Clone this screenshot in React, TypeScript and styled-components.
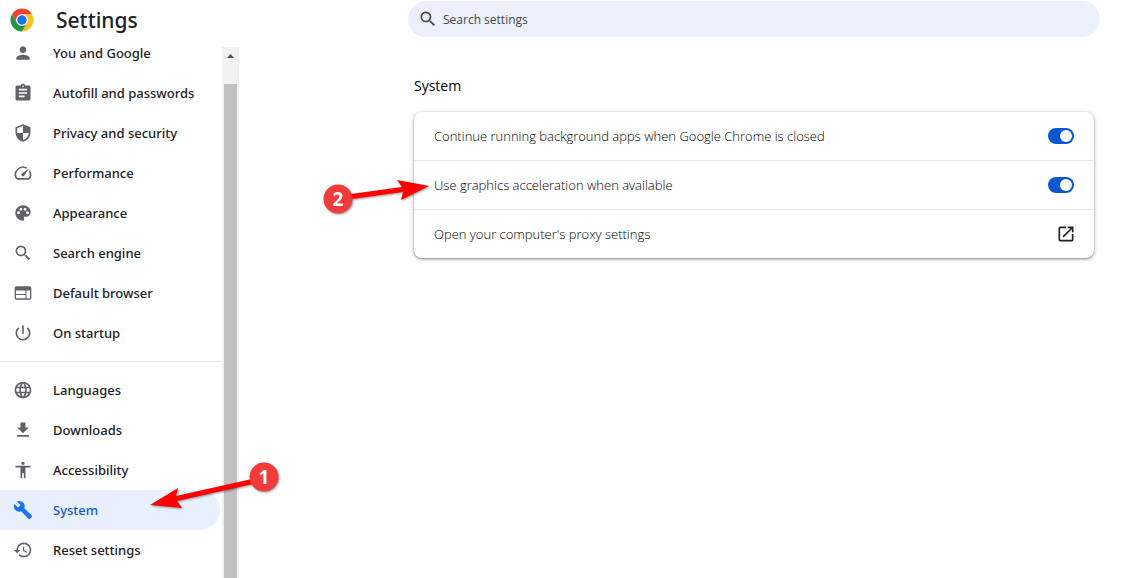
import React from "react";
import styled, { createGlobalStyle } from "styled-components";
import type { IconType } from "react-icons";
import {
  MdAccessibility,
  MdAssignment,
  MdBuild,
  MdFileDownload,
  MdHistory,
  MdLanguage,
  MdOpenInNew,
  MdPerson,
  MdPowerSettingsNew,
  MdSearch,
} from "react-icons/md";

const GlobalStyle = createGlobalStyle`
  * { box-sizing: border-box; }
  body {
    margin: 0;
    background: #fff;
    color: #202124;
    font-family: "Noto Sans", "Open Sans", sans-serif;
    font-size: 13px;
  }
`;

const Page = styled.div`
  position: relative;
  display: grid;
  grid-template-columns: 239px minmax(0, 1fr);
  height: 100vh;
  overflow: hidden;
`;

const Sidebar = styled.aside`
  display: flex;
  flex-direction: column;
  min-height: 0;
`;

const Brand = styled.header`
  display: flex;
  align-items: center;
  gap: 22px;
  flex: none;
  height: 47px;
  padding: 0 0 8px 10px;
`;

const Title = styled.h1`
  margin: 0;
  font-size: 21px;
  font-weight: 500;
  line-height: 28px;
`;

const MenuArea = styled.div`
  display: flex;
  flex: 1;
  min-height: 0;
`;

const Menu = styled.nav`
  flex: 1;
  margin-top: -14px;
`;

const MenuLink = styled.a<{ $current?: boolean }>`
  display: flex;
  align-items: center;
  gap: 20px;
  height: 40px;
  margin-right: 2px;
  padding-left: 13px;
  border-radius: 0 20px 20px 0;
  background: ${(p) => (p.$current ? "#e8f0fe" : "transparent")};
  color: ${(p) => (p.$current ? "#1a57cf" : "#202124")};
  font-weight: 500;
  text-decoration: none;

  svg {
    width: 20px;
    height: 20px;
    color: ${(p) => (p.$current ? "#1a73e8" : "#5f6368")};
  }
`;

const Divider = styled.hr`
  height: 1px;
  margin: 8px 0;
  border: 0;
  background: #e8eaed;
`;

const ScrollTrack = styled.div`
  display: flex;
  flex-direction: column;
  align-items: center;
  flex: none;
  width: 17px;
  background: #f1f1f1;

  svg {
    flex: none;
    width: 17px;
    height: 17px;
    margin-bottom: 20px;
  }
`;

const ScrollThumb = styled.div`
  flex: 1;
  width: 13px;
  background: #c1c1c1;
`;

const Main = styled.main`
  padding: 1px 39px 0 169px;
`;

const SearchBox = styled.label`
  display: flex;
  align-items: center;
  gap: 5px;
  height: 36px;
  padding: 0 20px 0 10px;
  border-radius: 18px;
  background: #ecf0fa;
  color: #474747;

  svg {
    flex: none;
    width: 20px;
    height: 20px;
  }
`;

const SearchInput = styled.input`
  flex: 1;
  min-width: 0;
  padding: 0;
  border: 0;
  outline: 0;
  background: transparent;
  color: #474747;
  font: 500 12px "Open Sans", "Noto Sans", sans-serif;

  &::placeholder {
    color: #474747;
    opacity: 1;
  }
`;

const Section = styled.section`
  padding: 39px 6px 0;
  color: #000;
  font-family: "Open Sans", "Noto Sans", sans-serif;
`;

const SectionTitle = styled.h2`
  margin: 0 0 16px;
  font-size: 14px;
  font-weight: 400;
  line-height: 20px;
`;

const Card = styled.div`
  border-radius: 8px;
  background: #fff;
  box-shadow: 0 1px 2px rgba(60, 64, 67, 0.5), 0 1px 4px 1px rgba(60, 64, 67, 0.2);
`;

const Row = styled.label`
  display: flex;
  align-items: center;
  justify-content: space-between;
  height: 48px;
  padding: 0 20px;
  font-weight: 300;

  & + & {
    height: 49px;
    border-top: 1px solid #e8eaed;
  }
`;

const Switch = styled.input`
  display: grid;
  align-items: center;
  justify-items: start;
  appearance: none;
  width: 26px;
  height: 16px;
  margin: 0;
  padding: 0 2px;
  border-radius: 8px;
  background: #9aa0a6;

  &::before {
    content: "";
    width: 12px;
    height: 12px;
    border-radius: 50%;
    background: #fff;
  }

  &:checked {
    justify-items: end;
    background: #0b57d0;
  }
`;

const IconButton = styled.button`
  display: flex;
  margin: 0 -2px 0 0;
  padding: 0;
  border: 0;
  background: none;
  color: #202124;

  svg {
    width: 20px;
    height: 20px;
  }
`;

const Callouts = styled.svg`
  position: absolute;
  top: 0;
  left: 0;
  pointer-events: none;
  filter: drop-shadow(1px 1px 1px rgba(0, 0, 0, 0.4));

  text {
    fill: #fff;
    font: 700 19px "Open Sans", sans-serif;
    text-anchor: middle;
  }
`;

const ChromeLogo = () => (
  <svg width="24" height="24" viewBox="0 0 48 48" aria-hidden="true">
    <path d="M4.08 12.5A23 23 0 0 1 43.92 12.5H24A11.5 11.5 0 0 0 14.04 29.75Z" fill="#ea4335" />
    <path d="M43.92 12.5A23 23 0 0 1 24 47L33.96 29.75A11.5 11.5 0 0 0 24 12.5Z" fill="#fcc31e" />
    <path d="M24 47A23 23 0 0 1 4.08 12.5L14.04 29.75A11.5 11.5 0 0 0 33.96 29.75Z" fill="#229342" />
    <circle cx="24" cy="24" r="11.5" fill="#fff" />
    <circle cx="24" cy="24" r="9.5" fill="#1a73e8" />
  </svg>
);

const ShieldIcon = () => (
  <svg viewBox="0 0 24 24" fill="currentColor" aria-hidden="true">
    <path
      fillRule="evenodd"
      d="M12 1.500 3 5v6c0 5.550 3.840 10.240 9 11.500 5.160-1.260 9-5.950 9-11.500V5l-9-3.500zM12 3.700V12h7c-.53 4.120-3.280 7.290-7 8.440V12H5V6.400l7-2.700z"
    />
  </svg>
);

const GaugeIcon = () => (
  <svg viewBox="0 0 24 24" fill="currentColor" aria-hidden="true">
    <path d="m20.38 8.57-1.23 1.85a8 8 0 0 1-.22 7.58H5.07A8 8 0 0 1 15.58 6.85l1.85-1.23A10 10 0 0 0 3.35 19a2 2 0 0 0 1.72 1h13.85a2 2 0 0 0 1.74-1 10 10 0 0 0-.27-10.44z" />
    <path d="M10.59 15.41a2 2 0 0 0 2.83 0l5.66-8.49-8.49 5.66a2 2 0 0 0 0 2.83z" />
  </svg>
);

const PaletteIcon = () => (
  <svg viewBox="0 0 24 24" fill="currentColor" aria-hidden="true">
    <path
      fillRule="evenodd"
      d="M12 2.800c5.200 0 9.200 3.500 9.200 8.100 0 3.300-2.600 5.700-5.600 5.700h-1.700c-.8 0-1.200.8-.8 1.400.8 1.300.4 3.200-1.100 3.200-5.100 0-9.200-4.100-9.200-9.200S6.900 2.800 12 2.800zM6.600 10a1.700 1.700 0 1 0 0 3.400 1.700 1.700 0 1 0 0-3.400zM9.500 5.900a1.700 1.700 0 1 0 0 3.400 1.700 1.700 0 1 0 0-3.400zM14.500 5.900a1.700 1.700 0 1 0 0 3.400 1.700 1.700 0 1 0 0-3.400zM17.400 10a1.700 1.700 0 1 0 0 3.400 1.700 1.700 0 1 0 0-3.400z"
    />
  </svg>
);

const BrowserIcon = () => (
  <svg viewBox="0 0 24 24" fill="currentColor" aria-hidden="true">
    <path
      fillRule="evenodd"
      d="M4 4h16a2 2 0 0 1 2 2v12a2 2 0 0 1-2 2H4a2 2 0 0 1-2-2V6c0-1.1.9-2 2-2zM3.600 9v4.200h11.400V9H3.600zM3.600 14.400v4h11.400v-4H3.600zM16.200 9v9.400h4.200V9h-4.200z"
    />
  </svg>
);

type Entry = { label: string; icon: IconType | (() => React.JSX.Element); current?: boolean };

const primary: Entry[] = [
  { label: "You and Google", icon: MdPerson },
  { label: "Autofill and passwords", icon: MdAssignment },
  { label: "Privacy and security", icon: ShieldIcon },
  { label: "Performance", icon: GaugeIcon },
  { label: "Appearance", icon: PaletteIcon },
  { label: "Search engine", icon: MdSearch },
  { label: "Default browser", icon: BrowserIcon },
  { label: "On startup", icon: MdPowerSettingsNew },
];

const advanced: Entry[] = [
  { label: "Languages", icon: MdLanguage },
  { label: "Downloads", icon: MdFileDownload },
  { label: "Accessibility", icon: MdAccessibility },
  { label: "System", icon: MdBuild, current: true },
  { label: "Reset settings", icon: MdHistory },
];

const renderEntry = ({ label, icon: Icon, current }: Entry) => (
  <MenuLink key={label} href="#" $current={current} aria-current={current ? "page" : undefined}>
    <Icon />
    {label}
  </MenuLink>
);

export default function App() {
  return (
    <Page>
      <GlobalStyle />
      <Sidebar>
        <Brand>
          <ChromeLogo />
          <Title>Settings</Title>
        </Brand>
        <MenuArea>
          <Menu>
            {primary.map(renderEntry)}
            <Divider />
            {advanced.map(renderEntry)}
          </Menu>
          <ScrollTrack>
            <svg viewBox="0 0 17 17" aria-hidden="true">
              <path d="M5 11 8.500 7 12 11Z" fill="#505050" />
            </svg>
            <ScrollThumb />
          </ScrollTrack>
        </MenuArea>
      </Sidebar>
      <Main>
        <SearchBox>
          <MdSearch />
          <SearchInput type="search" placeholder="Search settings" aria-label="Search settings" />
        </SearchBox>
        <Section>
          <SectionTitle>System</SectionTitle>
          <Card>
            <Row>
              Continue running background apps when Google Chrome is closed
              <Switch type="checkbox" role="switch" defaultChecked />
            </Row>
            <Row>
              Use graphics acceleration when available
              <Switch type="checkbox" role="switch" defaultChecked />
            </Row>
            <Row>
              Open your computer's proxy settings
              <IconButton type="button" aria-label="Open your computer's proxy settings">
                <MdOpenInNew />
              </IconButton>
            </Row>
          </Card>
        </Section>
      </Main>
      <Callouts width="440" height="530">
        <path d="M150 505 178 488 176 496 252 479 253 484 177 501 182 508Z" fill="#f00" />
        <circle cx="264" cy="477" r="14.500" fill="#f23b3b" />
        <text x="264" y="484">1</text>
        <path d="M429 186 397 180 402 187 351 194 352 199 403 192 401 200Z" fill="#f00" />
        <circle cx="338" cy="199" r="14.500" fill="#f23b3b" />
        <text x="338" y="206">2</text>
      </Callouts>
    </Page>
  );
}
